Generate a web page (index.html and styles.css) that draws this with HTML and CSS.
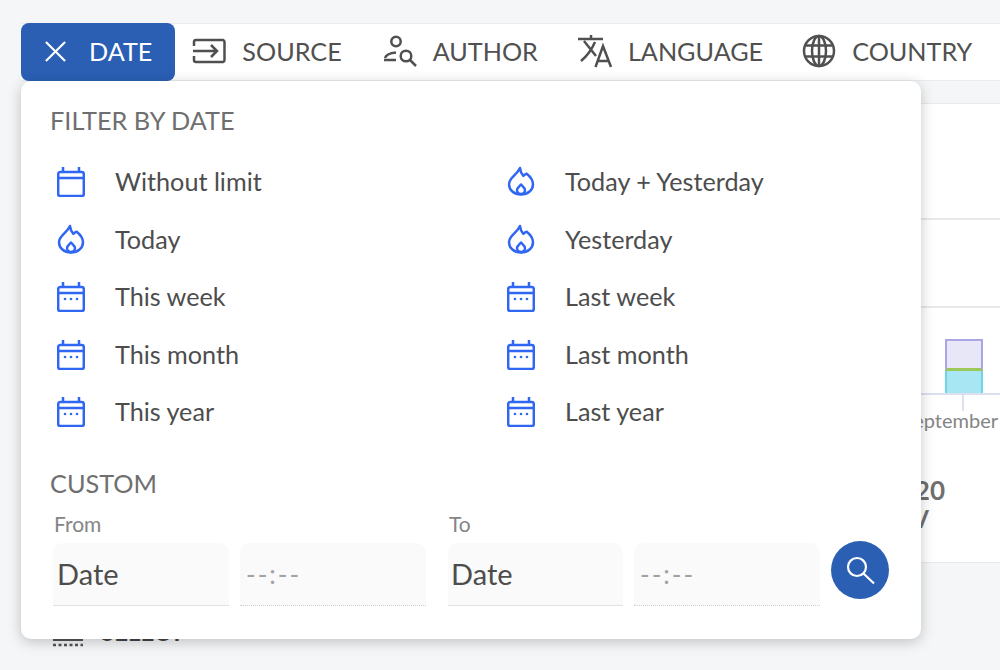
FILE: index.html
```html
<!DOCTYPE html>
<html lang="en">
<head>
<meta charset="utf-8">
<title>Filter by date</title>
<link rel="stylesheet" href="styles.css">
</head>
<body>
<svg class="defs" width="0" height="0" aria-hidden="true">
  <symbol id="cal" viewBox="0 0 28 32">
    <path d="M1.200 9a2 2 0 0 1 2-2h21.600a2 2 0 0 1 2 2v20a2 2 0 0 1-2 2H3.200a2 2 0 0 1-2-2zM1.200 13h25.600M6 2V7M22 2V7" fill="none" stroke="currentColor" stroke-width="2.500"/>
  </symbol>
  <symbol id="cald" viewBox="0 0 28 32">
    <path d="M1.200 9a2 2 0 0 1 2-2h21.600a2 2 0 0 1 2 2v20a2 2 0 0 1-2 2H3.200a2 2 0 0 1-2-2zM1.200 13h25.600M6 2V7M22 2V7" fill="none" stroke="currentColor" stroke-width="2.500"/>
    <circle cx="8" cy="19" r="1.300" fill="currentColor"/><circle cx="14" cy="19" r="1.300" fill="currentColor"/><circle cx="20" cy="19" r="1.300" fill="currentColor"/>
  </symbol>
  <symbol id="flame" viewBox="0 0 28 30">
    <path d="M13 2c.3 3.600 1.800 6 3.400 7.800 1-.9 2.100-1.600 3.300-2.100C23.800 11 26 15.300 26 18.300 26 24 21 28.500 14 28.500S2 24 2 18.300C2 11.500 10 9 13 2z" fill="none" stroke="currentColor" stroke-width="2.500" stroke-linejoin="round"/>
    <path d="M14 18.500c1.500 1.700 4 3.300 4 5.500a4 4 0 0 1-8 0c0-2.200 2.500-3.800 4-5.500z" fill="none" stroke="currentColor" stroke-width="2.500" stroke-linejoin="round"/>
  </symbol>
</svg>

<div class="page">
  <nav class="toolbar">
    <div class="tab tab-active">
      <svg class="ic-x" viewBox="0 0 24 24"><path d="M2 2l20 20M22 2L2 22" fill="none" stroke="#fff" stroke-width="2.200"/></svg>
      <span>DATE</span>
    </div>
    <div class="tab tab-source">
      <svg class="ic" viewBox="0 0 34 28"><path d="M2 9V5a2 2 0 0 1 2-2h27a2 2 0 0 1 1.500 2v18a2 2 0 0 1-1.500 2H4a2 2 0 0 1-2-2v-4M1 14h24M19 8l6 6-6 6" fill="none" stroke="#505050" stroke-width="2.500"/></svg>
      <span>SOURCE</span>
    </div>
    <div class="tab">
      <svg class="ic" viewBox="0 0 34 32"><g fill="none" stroke="#505050" stroke-width="2.500"><circle cx="13" cy="6.500" r="4.700"/><path d="M13 17.500c-5 .5-10 2-11 5.500M1 25h12"/><circle cx="23" cy="21" r="5.300"/><path d="M27 25l6 6"/></g></svg>
      <span>AUTHOR</span>
    </div>
    <div class="tab tab-language">
      <svg class="ic" viewBox="0 0 34 34"><g fill="none" stroke="#505050" stroke-width="2.500"><path d="M0 5h25M13 1v4M6 7l12 15M17 8C14 15 9 22 3 27"/><path d="M17.500 33L25 12l8 21M20 27h10"/></g></svg>
      <span>LANGUAGE</span>
    </div>
    <div class="tab">
      <svg class="ic" viewBox="0 0 34 34"><g fill="none" stroke="#505050" stroke-width="2.500"><circle cx="17" cy="17" r="15"/><ellipse cx="17" cy="17" rx="7" ry="15"/><path d="M17 2v30M3.500 11.500h27M3.500 22.500h27"/></g></svg>
      <span>COUNTRY</span>
    </div>

    <section class="popover">
      <h2 class="pop-title">FILTER BY DATE</h2>
      <ul class="ranges">
        <li class="range"><svg class="ri"><use href="#cal"/></svg>Without limit</li>
        <li class="range"><svg class="ri"><use href="#flame"/></svg>Today + Yesterday</li>
        <li class="range"><svg class="ri"><use href="#flame"/></svg>Today</li>
        <li class="range"><svg class="ri"><use href="#flame"/></svg>Yesterday</li>
        <li class="range"><svg class="ri"><use href="#cald"/></svg>This week</li>
        <li class="range"><svg class="ri"><use href="#cald"/></svg>Last week</li>
        <li class="range"><svg class="ri"><use href="#cald"/></svg>This month</li>
        <li class="range"><svg class="ri"><use href="#cald"/></svg>Last month</li>
        <li class="range"><svg class="ri"><use href="#cald"/></svg>This year</li>
        <li class="range"><svg class="ri"><use href="#cald"/></svg>Last year</li>
      </ul>
      <h2 class="pop-title custom-title">CUSTOM</h2>
      <div class="custom">
        <div class="group">
          <div class="lbl">From</div>
          <div class="fields">
            <div class="field field-date">Date</div>
            <div class="field field-time">--:--</div>
          </div>
        </div>
        <div class="group">
          <div class="lbl">To</div>
          <div class="fields">
            <div class="field field-date field-date-to">Date</div>
            <div class="field field-time">--:--</div>
          </div>
        </div>
        <button class="go" type="button" aria-label="Search">
          <svg viewBox="0 0 30 30" width="30" height="30"><g fill="none" stroke="#fff" stroke-width="2.200"><circle cx="12" cy="12" r="9"/><path d="M18.500 18.500L29 28.500"/></g></svg>
        </button>
      </div>
    </section>
  </nav>

  <main class="card">
    <div class="sec sec-a"></div>
    <div class="sec sec-b"></div>
    <div class="sec-chart">
      <div class="bars">
        <div class="bar-purple"></div>
        <div class="bar-cyan"></div>
      </div>
      <div class="axis"></div>
      <div class="tick"></div>
      <div class="month">September</div>
      <div class="stat">20</div>
      <div class="stat-sub">V</div>
    </div>
  </main>

  <div class="below">
    <svg class="below-ic" viewBox="0 0 30 10"><path d="M0 2h30" stroke="#555" stroke-width="2"/><path d="M0 7h30" stroke="#555" stroke-width="2.500" stroke-dasharray="3 2.500"/></svg>
    <span>SELECT</span>
  </div>
</div>
</body>
</html>
```
FILE: styles.css
```css
* { box-sizing: border-box; }
html, body { margin: 0; padding: 0; height: 670px; overflow: hidden; }
body {
  background: #f5f6f8;
  font-family: Lato, "Open Sans", sans-serif;
  color: #4d4d4d;
}
.defs { position: absolute; }
.page { padding: 23px 0 0 21px; }

.toolbar {
  position: relative;
  display: flex;
  height: 58px;
  background: #fff;
  border-top: 1px solid #ececec;
  border-bottom: 1px solid #ececec;
}
.tab {
  display: flex;
  align-items: center;
  gap: 16px;
  padding: 0 20px 2px;
  font-size: 25.2px;
  color: #505050;
  white-space: nowrap;
}
.tab-active {
  margin: -1px 0;
  padding: 0 23px 2px 23px;
  gap: 22px;
  background: #2a5fb4;
  color: #fff;
  border-radius: 8px;
}
.tab-source { padding-left: 17px; padding-right: 21px; }
.tab-language { padding-right: 19px; }
.ic-x { width: 23px; height: 23px; }
.ic { width: 34px; height: 34px; }

.popover {
  position: absolute;
  left: 0;
  top: 57px;
  z-index: 5;
  width: 900px;
  height: 558px;
  padding: 24px 30px 0 29px;
  background: #fff;
  border-radius: 10px;
  box-shadow: 0 3px 14px rgba(0, 0, 0, .22);
}
.pop-title {
  margin: 0;
  font-size: 25.3px;
  font-weight: 400;
  line-height: 30px;
  color: #6f6f6f;
}
.ranges {
  display: grid;
  grid-template-columns: 450px 450px;
  grid-auto-rows: 57.5px;
  margin: 17.5px 0 0;
  padding: 0;
  list-style: none;
}
.range {
  display: flex;
  align-items: center;
  gap: 30px;
  padding-left: 7px;
  font-size: 25.2px;
  color: #4d4d4d;
}
.ri { width: 28px; height: 32px; color: #2f66f2; flex: none; }
.custom-title { margin-top: 27.5px; }
.custom {
  display: flex;
  align-items: flex-end;
  gap: 22px;
  margin-top: 14px;
  padding-left: 3px;
}
.lbl {
  padding-left: 1px;
  font-size: 21px;
  line-height: 24px;
  color: #858585;
}
.fields {
  display: flex;
  gap: 11px;
  margin-top: 7px;
}
.field {
  display: flex;
  align-items: center;
  height: 63px;
  padding-left: 5px;
  background: #fafafa;
  border-radius: 10px 10px 0 0;
  border-bottom: 1px solid #e2e2e2;
}
.field-date { width: 176px; padding-left: 4px; font-size: 29px; color: #4d4d4d; }
.field-date-to { width: 175px; padding-left: 3px; }
.field-time {
  width: 186px;
  padding-left: 6px;
  font-size: 26px;
  letter-spacing: 2px;
  color: #a2a2a2;
  border-bottom: 1px dotted #cfcfcf;
}
.go {
  display: flex;
  align-items: center;
  justify-content: center;
  width: 58px;
  height: 58px;
  margin: 0 0 7px -11px;
  padding: 0;
  border: 0;
  border-radius: 50%;
  background: #2a5fb4;
}

.card {
  margin-top: 22px;
  height: 460px;
  background: #fff;
  border-top: 1px solid #e9e9e9;
  border-bottom: 1px solid #e9e9e9;
}
.sec-a { height: 116px; border-bottom: 2px solid #e9e9e9; }
.sec-b { height: 88px; border-bottom: 2px solid #e9e9e9; }
.sec-chart {
  display: flex;
  flex-direction: column;
  align-items: flex-end;
  padding-top: 31px;
}
.bars { width: 38px; margin-right: 17px; }
.bar-purple {
  height: 32px;
  background: #e8e7f8;
  border: 2px solid #a9a5e6;
  border-bottom: 3px solid #9cc95a;
}
.bar-cyan {
  height: 22px;
  background: #a8e6f4;
  border: 2px solid #6fd3ec;
  border-width: 0 2px;
}
.axis { width: 100%; height: 2px; background: #dcdfee; }
.tick { width: 2px; height: 16px; margin-right: 36px; background: #dcdfee; }
.month {
  margin-top: -2px;
  margin-right: 2px;
  font-size: 20px;
  line-height: 22px;
  color: #858585;
}
.stat {
  margin-top: 44px;
  margin-right: 55px;
  font-size: 26px;
  font-weight: 700;
  line-height: 31px;
  color: #6f6f6f;
}
.stat-sub {
  margin-right: 71px;
  font-size: 24px;
  font-weight: 700;
  line-height: 26px;
  color: #6f6f6f;
}

.below {
  display: flex;
  align-items: center;
  gap: 18px;
  margin: 54px 0 0 32px;
  font-size: 24px;
  font-weight: 700;
  color: #444;
}
.below-ic { width: 30px; height: 10px; align-self: flex-end; margin-bottom: -2px; }
```
